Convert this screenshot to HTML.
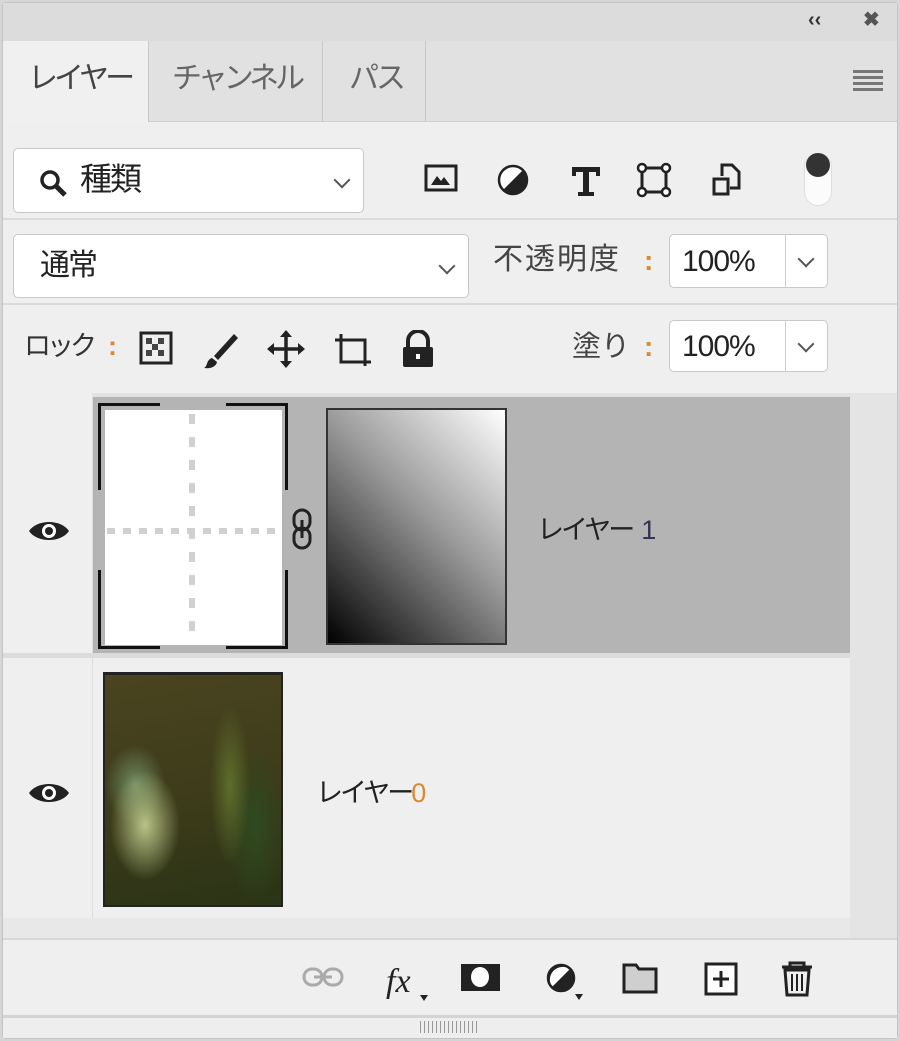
<!DOCTYPE html>
<html><head><meta charset="utf-8"><style>
*{margin:0;padding:0;box-sizing:border-box}
body{width:900px;height:1041px;background:#d6d6d6;position:relative;overflow:hidden;font-family:"Liberation Sans","Noto Sans CJK JP",sans-serif;color:#222}
.a{position:absolute}
.t{position:absolute;font-size:30px;color:#444;line-height:1}
.box{position:absolute;background:#fff;border:1px solid #c8c8c8;border-radius:5px}
.chev{position:absolute;width:12px;height:12px;border-right:2px solid #555;border-bottom:2px solid #555;transform:rotate(45deg)}
</style></head><body>
<div class="a" style="left:2px;top:2px;width:896px;height:1037px;background:#efefef;border:1px solid #c4c4c4;border-radius:4px"></div>
<div class="a" style="left:3px;top:3px;width:894px;height:38px;background:#dcdcdc"></div>
<div class="t" style="left:808px;top:10px;font-size:20px;font-weight:bold;color:#333">‹‹</div>
<div class="t" style="left:863px;top:10px;font-size:20px;font-weight:bold;color:#555">✖</div>
<div class="a" style="left:3px;top:41px;width:894px;height:81px;background:#e1e1e1;border-bottom:1px solid #d0d0d0"></div>
<div class="a" style="left:3px;top:41px;width:145px;height:82px;background:#f0f0f0"></div>
<div class="a" style="left:322px;top:41px;width:1px;height:81px;background:#c8c8c8"></div>
<div class="a" style="left:425px;top:41px;width:1px;height:81px;background:#c8c8c8"></div>
<div class="a" style="left:148px;top:41px;width:1px;height:81px;background:#c8c8c8"></div>
<div class="t" style="left:28px;top:64px;font-size:30px;color:#444;letter-spacing:-4px">レイヤー</div>
<div class="t" style="left:172px;top:64px;font-size:30px;color:#666;letter-spacing:-4px">チャンネル</div>
<div class="t" style="left:349px;top:64px;font-size:30px;color:#666;letter-spacing:-3px">パス</div>
<div class="a" style="left:853px;top:70px;width:30px;height:3px;background:#777;box-shadow:0 6px 0 #777,0 12px 0 #777,0 18px 0 #777"></div>
<div class="box" style="left:13px;top:148px;width:351px;height:65px"></div>
<svg class="a" style="left:38px;top:168px" width="32" height="32" viewBox="0 0 32 32"><circle cx="12" cy="12" r="8" fill="none" stroke="#222" stroke-width="3.5"/><path d="M18 18L27 27" stroke="#222" stroke-width="5"/></svg>
<div class="t" style="left:80px;top:163px;font-size:32px;color:#222;letter-spacing:-2px">種類</div>
<div class="chev" style="left:336px;top:174px"></div>
<svg class="a" style="left:424px;top:162px" width="270" height="38" viewBox="0 0 270 38">
<rect x="2" y="4" width="30" height="24" fill="none" stroke="#222" stroke-width="3"/><path d="M7 23l6-9 4 5 3-4 6 8z" fill="#222"/>
<circle cx="89" cy="18" r="14" fill="#222"/><path d="M79 28A14 14 0 0 1 99 8z" fill="#fff"/><circle cx="89" cy="18" r="14" fill="none" stroke="#222" stroke-width="2.5"/>
<path d="M148 5h28v9h-4v-4h-7v20h5v4h-16v-4h5v-20h-7v4h-4z" fill="#222"/>
<rect x="218" y="6" width="24" height="24" fill="none" stroke="#222" stroke-width="3"/><circle cx="218" cy="6" r="4" fill="#fff" stroke="#222" stroke-width="2.5"/><circle cx="242" cy="6" r="4" fill="#fff" stroke="#222" stroke-width="2.5"/><circle cx="218" cy="30" r="4" fill="#fff" stroke="#222" stroke-width="2.5"/><circle cx="242" cy="30" r="4" fill="#fff" stroke="#222" stroke-width="2.5"/>
</svg>
<svg class="a" style="left:710px;top:162px" width="36" height="38" viewBox="0 0 36 38"><path d="M12 14V3h10l7 7v16h-9" fill="none" stroke="#222" stroke-width="3"/><rect x="4" y="17" width="14" height="15" fill="none" stroke="#222" stroke-width="3"/></svg>
<div class="a" style="left:804px;top:153px;width:28px;height:53px;border-radius:14px;background:#fbfbfb;border:1px solid #ddd"></div>
<div class="a" style="left:806px;top:153px;width:24px;height:24px;border-radius:50%;background:#333"></div>
<div class="a" style="left:3px;top:218px;width:894px;height:2px;background:#dadada"></div>
<div class="box" style="left:13px;top:234px;width:456px;height:64px"></div>
<div class="t" style="left:40px;top:251px;font-size:30px;color:#222;letter-spacing:-2px">通常</div>
<div class="chev" style="left:441px;top:260px"></div>
<div class="t" style="left:493px;top:245px;font-size:30px;color:#444;letter-spacing:2px">不透明度</div>
<div class="t" style="left:644px;top:247px;font-size:28px;color:#d98a30;font-weight:bold">:</div>
<div class="box" style="left:669px;top:234px;width:159px;height:54px"></div>
<div class="a" style="left:785px;top:234px;width:1px;height:54px;background:#ccc"></div>
<div class="t" style="left:682px;top:247px;font-size:30px;color:#222;letter-spacing:-1px">100%</div>
<div class="chev" style="left:800px;top:253px"></div>
<div class="a" style="left:3px;top:303px;width:894px;height:2px;background:#dadada"></div>
<div class="t" style="left:24px;top:333px;font-size:27px;color:#333;letter-spacing:-4px">ロック</div>
<div class="t" style="left:108px;top:333px;font-size:27px;color:#d98a30;font-weight:bold">:</div>
<svg class="a" style="left:138px;top:330px" width="310" height="40" viewBox="0 0 310 40">
<rect x="3" y="3" width="30" height="30" fill="none" stroke="#222" stroke-width="3"/><path d="M8 8h6v6h-6zM20 8h6v6h-6zM14 14h6v6h-6zM8 20h6v6h-6zM20 20h6v6h-6z" fill="#444"/>
<path d="M96 4L76 26l4 4L100 8z" fill="#222"/><path d="M74 28c-6 2-4 8-8 10 6 1 12-1 13-6z" fill="#222"/>
<path d="M148 2v34M131 19h34" stroke="#222" stroke-width="3.5"/><path d="M148 0l-6 7h12zM148 38l-6-7h12zM129 19l7-6v12zM167 19l-7-6v12z" fill="#222"/>
<path d="M203 4v28h30M197 10h30v26" fill="none" stroke="#222" stroke-width="3"/>
<rect x="265" y="17" width="30" height="20" rx="2" fill="#222"/><path d="M270 17v-6a10 10 0 0 1 20 0v6" fill="none" stroke="#222" stroke-width="4"/><rect x="278" y="24" width="4" height="5" fill="#fff"/>
</svg>
<div class="t" style="left:572px;top:333px;font-size:29px;color:#444">塗り</div>
<div class="t" style="left:644px;top:333px;font-size:28px;color:#d98a30;font-weight:bold">:</div>
<div class="box" style="left:669px;top:320px;width:159px;height:52px"></div>
<div class="a" style="left:785px;top:320px;width:1px;height:52px;background:#ccc"></div>
<div class="t" style="left:682px;top:332px;font-size:30px;color:#222;letter-spacing:-1px">100%</div>
<div class="chev" style="left:800px;top:338px"></div>
<div class="a" style="left:92px;top:393px;width:758px;height:4px;background:#e2e2e2"></div>
<div class="a" style="left:850px;top:393px;width:47px;height:547px;background:#e4e4e4"></div>
<div class="a" style="left:3px;top:918px;width:847px;height:22px;background:#e8e8e8"></div>
<div class="a" style="left:3px;top:938px;width:894px;height:2px;background:#d8d8d8"></div>
<div class="a" style="left:92px;top:397px;width:758px;height:256px;background:#b4b4b4"></div>
<div class="a" style="left:92px;top:397px;width:1px;height:521px;background:#dcdcdc"></div>
<div class="a" style="left:3px;top:653px;width:847px;height:5px;background:#dcdcdc"></div>
<svg class="a" style="left:27px;top:517px" width="44" height="28" viewBox="0 0 44 28"><path d="M2 14C10 2 34 2 42 14C34 26 10 26 2 14z" fill="#222"/><circle cx="22" cy="14" r="7" fill="#fff"/><circle cx="22" cy="14" r="4" fill="#222"/></svg>
<svg class="a" style="left:27px;top:779px" width="44" height="28" viewBox="0 0 44 28"><path d="M2 14C10 2 34 2 42 14C34 26 10 26 2 14z" fill="#222"/><circle cx="22" cy="14" r="7" fill="#fff"/><circle cx="22" cy="14" r="4" fill="#222"/></svg>
<div class="a" style="left:98px;top:403px;width:190px;height:246px;border:3px solid #111"></div>
<div class="a" style="left:160px;top:401px;width:66px;height:250px;background:#b4b4b4"></div>
<div class="a" style="left:96px;top:490px;width:6px;height:80px;background:#b4b4b4"></div>
<div class="a" style="left:284px;top:490px;width:6px;height:80px;background:#b4b4b4"></div>
<div class="a" style="left:105px;top:410px;width:177px;height:235px;background:#fff"></div>
<div class="a" style="left:189px;top:414px;width:6px;height:230px;background:repeating-linear-gradient(#d0d0d0 0 10px,transparent 10px 23px)"></div>
<div class="a" style="left:107px;top:528px;width:174px;height:6px;background:repeating-linear-gradient(90deg,#d0d0d0 0 8px,transparent 8px 16px)"></div>
<svg class="a" style="left:291px;top:508px" width="22" height="42" viewBox="0 0 22 42"><rect x="3" y="2" width="16" height="20" rx="8" fill="none" stroke="#222" stroke-width="3"/><rect x="3" y="20" width="16" height="20" rx="8" fill="none" stroke="#222" stroke-width="3"/><path d="M11 12v18" stroke="#222" stroke-width="3"/></svg>
<div class="a" style="left:326px;top:408px;width:181px;height:237px;border:2px solid #333;background:linear-gradient(225deg,#fff 0%,#999 45%,#000 100%)"></div>
<div class="t" style="left:537px;top:517px;font-size:27px;color:#222;letter-spacing:-3px">レイヤー&nbsp; <span style="color:#335">1</span></div>
<div class="a" style="left:103px;top:672px;width:180px;height:235px;border:2px solid #222;border-top:3px solid #222;background:
radial-gradient(ellipse 35px 55px at 40px 150px,#b8c488,transparent),
radial-gradient(ellipse 30px 40px at 30px 110px,#6e8a60,transparent),
radial-gradient(ellipse 20px 80px at 125px 110px,#5d6e2c,transparent),
radial-gradient(ellipse 30px 80px at 150px 150px,#2e4a20,transparent),
linear-gradient(170deg,#4a4420,#3e3c1a 50%,#2a3316)"></div>
<div class="t" style="left:316px;top:780px;font-size:27px;color:#222;letter-spacing:-3px">レイヤー<span style="color:#d98a30">0</span></div>
<svg class="a" style="left:300px;top:955px" width="520" height="50" viewBox="0 0 520 50">
<g fill="none" stroke="#aaa" stroke-width="3"><rect x="4" y="14" width="18" height="16" rx="8"/><rect x="24" y="14" width="18" height="16" rx="8"/><path d="M14 22h18"/></g>
<text x="86" y="37" font-family="Liberation Serif,serif" font-style="italic" font-size="34" fill="#222">fx</text><path d="M120 40h8l-4 6z" fill="#222"/>
<rect x="161" y="9" width="39" height="27" fill="#222"/><ellipse cx="180" cy="22" rx="9" ry="10" fill="#fff"/>
<circle cx="261" cy="23" r="13" fill="#222"/><path d="M252 32A13 13 0 0 1 270 14z" fill="#fff"/><circle cx="261" cy="23" r="13" fill="none" stroke="#222" stroke-width="2.5"/><path d="M275 39h8l-4 6z" fill="#222"/>
<path d="M324 10h12l3 4h17v23h-32z" fill="#cfcfcf" stroke="#222" stroke-width="3"/>
<rect x="406" y="9" width="30" height="30" fill="#fff" stroke="#222" stroke-width="3"/><path d="M421 16v16M413 24h16" stroke="#222" stroke-width="3"/>
<path d="M482 12h30M490 12v-4h14v4" fill="none" stroke="#222" stroke-width="3"/><path d="M485 15h24l-2 25h-20z" fill="none" stroke="#222" stroke-width="3"/><path d="M492 19v17M497 19v17M502 19v17" stroke="#222" stroke-width="2"/>
</svg>
<div class="a" style="left:3px;top:1015px;width:894px;height:3px;background:#d4d4d4"></div>
<div class="a" style="left:3px;top:1018px;width:894px;height:20px;background:#eeeeee"></div>
<div class="a" style="left:420px;top:1021px;width:58px;height:12px;background:repeating-linear-gradient(90deg,#999 0 1px,transparent 1px 4px)"></div>
</body></html>
